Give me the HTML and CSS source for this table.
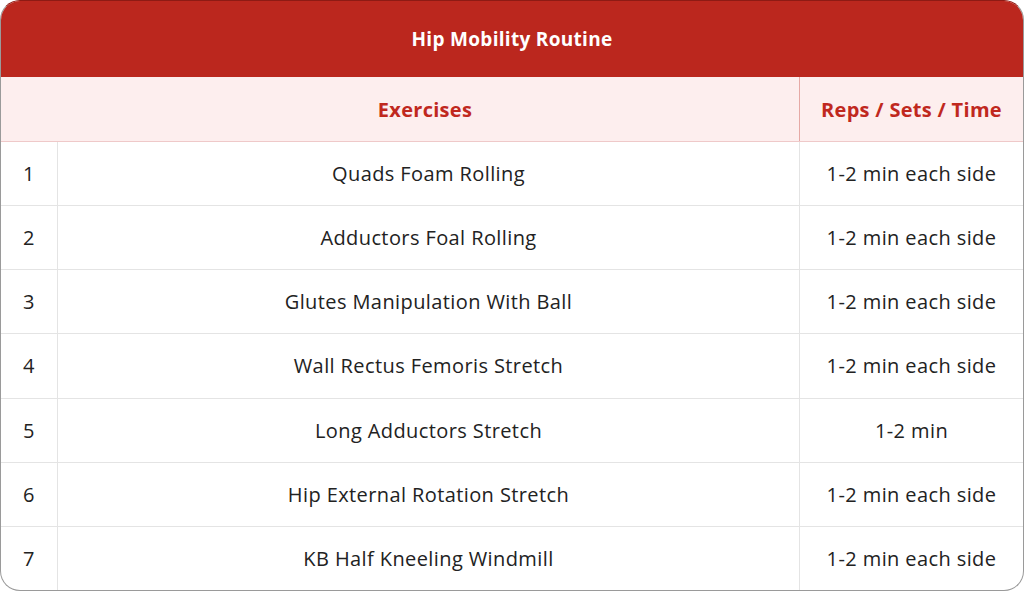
FILE: index.html
```html
<!DOCTYPE html>
<html lang="en">
<head>
<meta charset="utf-8">
<title>Hip Mobility Routine</title>
<link rel="stylesheet" href="styles.css">
</head>
<body>
<div class="card">
  <div class="title">Hip Mobility Routine</div>
  <div class="head">
    <div class="hcell"></div>
    <div class="hcell hex">Exercises</div>
    <div class="hcell hreps">Reps / Sets / Time</div>
  </div>
  <div class="row"><div class="num">1</div><div class="ex">Quads Foam Rolling</div><div class="reps">1-2 min each side</div></div>
  <div class="row"><div class="num">2</div><div class="ex">Adductors Foal Rolling</div><div class="reps">1-2 min each side</div></div>
  <div class="row"><div class="num">3</div><div class="ex">Glutes Manipulation With Ball</div><div class="reps">1-2 min each side</div></div>
  <div class="row"><div class="num">4</div><div class="ex">Wall Rectus Femoris Stretch</div><div class="reps">1-2 min each side</div></div>
  <div class="row"><div class="num">5</div><div class="ex">Long Adductors Stretch</div><div class="reps">1-2 min</div></div>
  <div class="row"><div class="num">6</div><div class="ex">Hip External Rotation Stretch</div><div class="reps">1-2 min each side</div></div>
  <div class="row last"><div class="num">7</div><div class="ex">KB Half Kneeling Windmill</div><div class="reps">1-2 min each side</div></div>
</div>
</body>
</html>
```
FILE: styles.css
```css
html, body {
  margin: 0;
  padding: 0;
  background: #ffffff;
}
body {
  font-family: "Open Sans", "Liberation Sans", sans-serif;
  color: #222222;
}
.card {
  width: 1024px;
  height: 591px;
  box-sizing: border-box;
  border: 1px solid #9a9a9a;
  border-top-color: #8e1a14;
  border-radius: 20px;
  overflow: hidden;
  display: flex;
  flex-direction: column;
}
.title {
  height: 76px;
  background: #bb271e;
  color: #ffffff;
  font-weight: 700;
  font-size: 19px;
  letter-spacing: 0.3px;
  display: flex;
  align-items: center;
  justify-content: center;
}
.head {
  height: 64px;
  background: #fdeeee;
  border-bottom: 1px solid #efc9c9;
  display: grid;
  grid-template-columns: 56px 742px 1fr;
}
.hcell {
  display: flex;
  align-items: center;
  justify-content: center;
  color: #c0281e;
  font-weight: 700;
  font-size: 20px;
  letter-spacing: 0.3px;
}
.hex {
  padding-right: 6px;
}
.hreps {
  border-left: 1px solid #e6a9a5;
}
.row {
  flex: 1;
  display: grid;
  grid-template-columns: 56px 742px 1fr;
  border-bottom: 1px solid #e4e4e4;
  font-size: 20px;
  letter-spacing: 0.4px;
}
.row.last {
  border-bottom: none;
}
.row > div {
  display: flex;
  align-items: center;
  justify-content: center;
}
.row > .num {
  justify-content: flex-start;
  padding-left: 22px;
}
.ex {
  border-left: 1px solid #e4e4e4;
}
.reps {
  border-left: 1px solid #e4e4e4;
}
```
